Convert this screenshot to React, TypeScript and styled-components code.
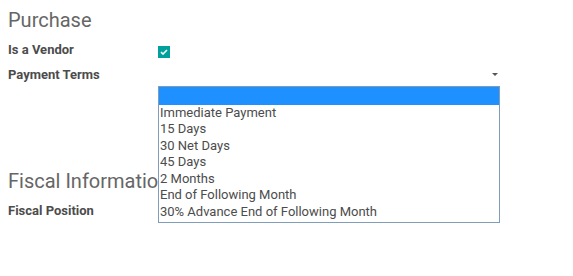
import React from 'react';
import styled, { createGlobalStyle } from 'styled-components';

const Global = createGlobalStyle`
  body {
    margin: 0;
    background: #fff;
    font-family: Roboto, "Liberation Sans", sans-serif;
    color: #4c4c4c;
  }
`;

const Sheet = styled.div`
  position: relative;
  padding: 8px 8px 0 8px;
  width: 573px;
  height: 276px;
  box-sizing: border-box;
`;

const Group = styled.div<{ gap?: number }>`
  margin-top: ${p => p.gap || 0}px;
`;

const GroupTitle = styled.div`
  font-size: 20px;
  line-height: 24px;
  color: #666666;
  margin-bottom: 5px;
`;

const Row = styled.div`
  display: grid;
  grid-template-columns: 150px 1fr;
  align-items: center;
  height: 25px;
`;

const Label = styled.div`
  font-size: 13px;
  font-weight: bold;
  color: #4c4c4c;
`;

const Check = styled.span`
  display: inline-flex;
  align-items: center;
  justify-content: center;
  width: 12px;
  height: 12px;
  background: #00a09d;
`;

const SelectBox = styled.div`
  position: relative;
  width: 342px;
  height: 20px;
`;

const Caret = styled.span`
  position: absolute;
  right: 2px;
  top: 8px;
  width: 0;
  height: 0;
  border-left: 3px solid transparent;
  border-right: 3px solid transparent;
  border-top: 3px solid #555;
`;

const Popup = styled.ul`
  position: absolute;
  left: 158px;
  top: 86px;
  width: 342px;
  margin: 0;
  padding: 0 0 2px 0;
  list-style: none;
  box-sizing: border-box;
  border: 1px solid #7f9db9;
  background: #fff;
`;

const Option = styled.li<{ active?: boolean }>`
  height: ${p => (p.active ? 17.5 : 16.5)}px;
  line-height: 16.5px;
  padding-left: 1px;
  font-size: 13px;
  color: #4c4c4c;
  background: ${p => (p.active ? '#1e90ff' : 'transparent')};
  white-space: nowrap;
`;

const terms = [
  'Immediate Payment',
  '15 Days',
  '30 Net Days',
  '45 Days',
  '2 Months',
  'End of Following Month',
  '30% Advance End of Following Month',
];

export default function App() {
  return (
    <Sheet>
      <Global />
      <Group>
        <GroupTitle>Purchase</GroupTitle>
        <Row>
          <Label>Is a Vendor</Label>
          <div>
            <Check>
              <svg width="8" height="6" viewBox="0 0 8 6">
                <path d="M1 3.2 L3 5 L7 1" stroke="#fff" strokeWidth="1.6" fill="none" />
              </svg>
            </Check>
          </div>
        </Row>
        <Row>
          <Label>Payment Terms</Label>
          <SelectBox>
            <Caret />
          </SelectBox>
        </Row>
      </Group>
      <Group gap={82}>
        <GroupTitle>Fiscal Information</GroupTitle>
        <Row>
          <Label>Fiscal Position</Label>
          <div />
        </Row>
      </Group>
      <Popup>
        <Option active> </Option>
        {terms.map(t => (
          <Option key={t}>{t}</Option>
        ))}
      </Popup>
    </Sheet>
  );
}
